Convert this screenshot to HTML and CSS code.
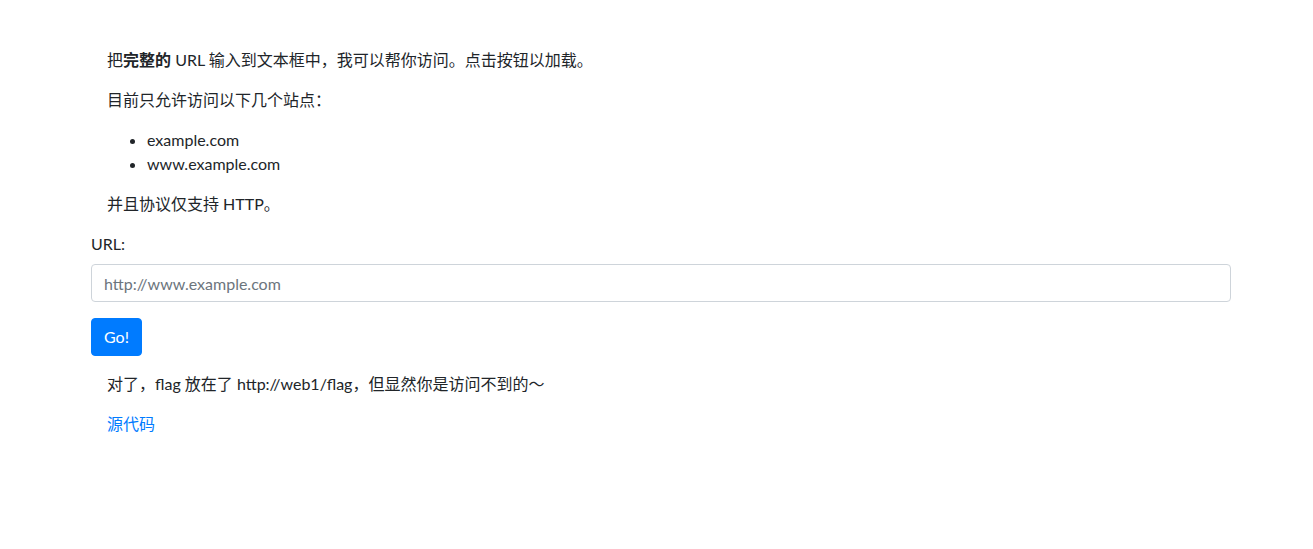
FILE: index.html
```html
<!DOCTYPE html>
<html lang="zh">
<head>
<meta charset="utf-8">
<title>URL</title>
<link rel="stylesheet" href="styles.css">
</head>
<body>
<div class="container">
  <div class="intro">
    <p>把<strong>完整的</strong> URL 输入到文本框中，我可以帮你访问。点击按钮以加载。</p>
    <p>目前只允许访问以下几个站点：</p>
    <ul>
      <li>example.com</li>
      <li>www.example.com</li>
    </ul>
    <p>并且协议仅支持 HTTP。</p>
  </div>
  <form class="form">
    <div class="form-group">
      <label class="label" for="url">URL:</label>
      <input class="form-control" id="url" type="text" placeholder="http://www.example.com">
    </div>
    <button class="btn" type="button">Go!</button>
  </form>
  <div class="intro">
    <p>对了，flag 放在了 http://web1/flag，但显然你是访问不到的～</p>
    <p><a class="link" href="#">源代码</a></p>
  </div>
</div>
</body>
</html>
```
FILE: styles.css
```css
* { box-sizing: border-box; }
html, body { margin: 0; padding: 0; }
body {
  font-family: "Lato", "Noto Sans CJK SC", sans-serif;
  font-size: 16px;
  line-height: 1.5;
  color: #212529;
  background: #fff;
}
.container {
  width: 1140px;
  margin-left: 91px;
  padding-top: 48px;
}
.intro { padding-left: 16px; }
p { margin: 0 0 16px; }
ul { margin: 0 0 16px; padding-left: 40px; }
strong { font-weight: 700; }
.form { margin-bottom: 16px; }
.form-group { margin-bottom: 16px; }
.label { display: inline-block; margin-bottom: 8px; }
.form-control {
  display: block;
  width: 100%;
  height: 38px;
  padding: 6px 12px;
  font: inherit;
  color: #495057;
  background: #fff;
  border: 1px solid #ced4da;
  border-radius: 4px;
}
.form-control::placeholder { color: #6c757d; opacity: 1; }
.btn {
  display: inline-block;
  height: 38px;
  padding: 6px 12px;
  font: inherit;
  color: #fff;
  background: #007bff;
  border: 1px solid #007bff;
  border-radius: 4px;
}
.link { color: #007bff; text-decoration: none; }
```
